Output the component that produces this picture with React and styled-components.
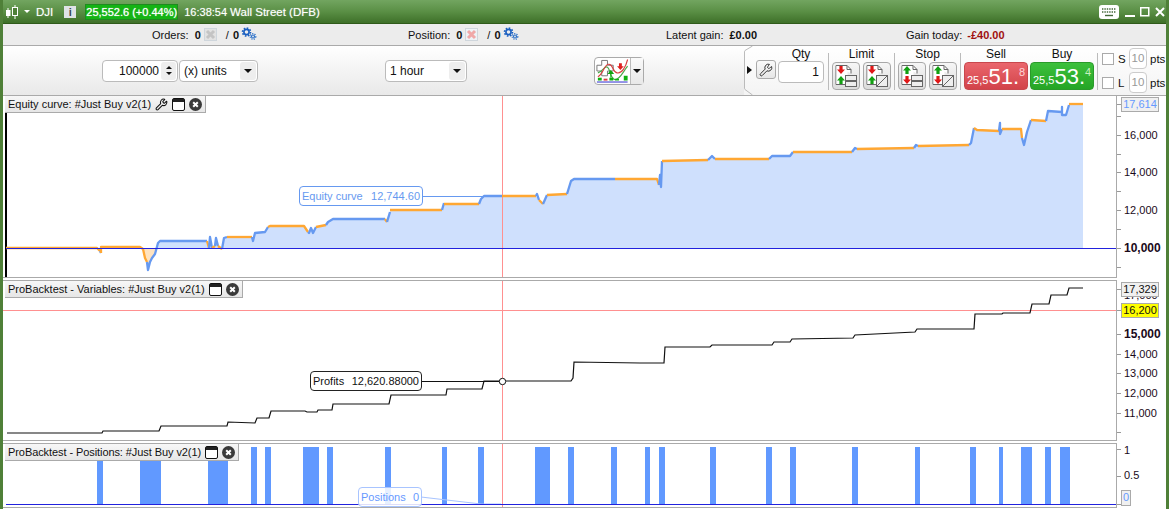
import React from 'react';
import styled, { createGlobalStyle } from 'styled-components';
import { Wrench } from 'lucide-react';

const GlobalStyle = createGlobalStyle`
  html, body { margin: 0; padding: 0; background: #fff; overflow: hidden; }
  body { font-family: "Liberation Sans", Arial, sans-serif; font-size: 11px; color: #111; }
`;

const Frame = styled.div`
  width: 1169px;
  height: 509px;
  box-sizing: border-box;
  border-left: 3px solid #4f8038;
  border-right: 3px solid #4f8038;
  background: #fff;
  overflow: hidden;
  position: relative;
`;

/* title bar */
const TitleBar = styled.div`
  height: 24px;
  margin: 0 -3px;
  box-sizing: border-box;
  padding: 0 4px 0 5px;
  display: flex;
  align-items: center;
  background: linear-gradient(#72a560, #5a8f45 50%, #3e7029);
  border-bottom: 1px solid #2f5a1a;
  color: #fff;
`;

const TitleText = styled.span`
  margin-left: ${(p) => p.$ml || 0}px;
  font-size: ${(p) => p.$fs || 11.5}px;
  text-shadow: 0 0 1px rgba(255, 255, 255, 0.5);
  white-space: nowrap;
`;

const InfoBadge = styled.span`
  width: 12px;
  height: 12px;
  margin-left: 11px;
  background: #dfe3e6;
  color: #3d4a55;
  font-weight: bold;
  font-size: 11px;
  line-height: 12px;
  text-align: center;
`;

const PriceBadge = styled.span`
  margin-left: 9px;
  width: 93px;
  height: 16px;
  box-sizing: border-box;
  border: 1px solid #1f8a1f;
  background: #14b414;
  color: #fff;
  font-size: 11px;
  line-height: 14px;
  text-align: center;
  white-space: nowrap;
  text-shadow: 0 0 1px rgba(255, 255, 255, 0.8);
`;

const WindowIcons = styled.div`
  margin-left: auto;
  display: flex;
  align-items: center;
  gap: 5px;
`;

/* orders / position line */
const StatusBar = styled.div`
  height: 22px;
  box-sizing: border-box;
  padding-left: 149px;
  display: grid;
  grid-template-columns: 256px 258px 240px 1fr;
  align-items: center;
  background: #ececec;
  border-bottom: 1px solid #aaa;
`;

const Stat = styled.div`
  display: flex;
  align-items: center;
  white-space: nowrap;
`;

const StatValue = styled.b`
  margin-left: ${(p) => p.$ml ?? 6}px;
  color: ${(p) => p.$color || '#111'};
`;

const Slash = styled.span`
  margin: 0 4px 0 8px;
`;

/* toolbar */
const Toolbar = styled.div`
  height: 50px;
  box-sizing: border-box;
  display: flex;
  align-items: center;
  background: linear-gradient(#fff, #f6f6f6 40%, #e9e9e9);
  border-bottom: 1px solid #aaa;
`;

const Spinner = styled.div`
  margin-left: 99px;
  width: 76px;
  height: 22px;
  box-sizing: border-box;
  border: 1px solid #bbb;
  border-radius: 4px;
  background: #fff;
  display: flex;
  align-items: center;
  justify-content: flex-end;
  padding-right: 1px;
  font-size: 12px;
`;

const SpinArrows = styled.span`
  width: 15px;
  height: 18px;
  margin-left: 2px;
  background: #eee;
  border-radius: 3px;
  display: flex;
  flex-direction: column;
  align-items: center;
  justify-content: center;
  gap: 3px;
`;

const Tri = styled.i`
  display: block;
  width: 0;
  height: 0;
  border-left: ${(p) => p.$size || 3}px solid transparent;
  border-right: ${(p) => p.$size || 3}px solid transparent;
  ${(p) => (p.$up ? 'border-bottom' : 'border-top')}: ${(p) => p.$size || 3}px solid ${(p) => p.$color || '#111'};
  margin-left: ${(p) => p.$ml || 0}px;
`;

const Select = styled.div`
  margin-left: ${(p) => p.$ml}px;
  width: ${(p) => p.$w}px;
  height: 22px;
  box-sizing: border-box;
  border: 1px solid #bbb;
  border-radius: 4px;
  background: #fff;
  display: flex;
  align-items: center;
  justify-content: space-between;
  padding: 0 1px 0 4px;
  font-size: 12px;
`;

const SelectArrow = styled.span`
  width: 16px;
  height: 18px;
  background: #eee;
  border-radius: 3px;
  display: flex;
  align-items: center;
  justify-content: center;
`;

const IndicatorButton = styled.div`
  margin-left: 127px;
  width: 50px;
  height: 28px;
  box-sizing: border-box;
  border: 1px solid #aaa;
  border-radius: 4px;
  background: #fff;
  display: flex;
  align-items: stretch;
`;

const IndicatorArrow = styled.span`
  margin-left: auto;
  width: 13px;
  border-left: 1px solid #bbb;
  background: linear-gradient(#fafafa, #e8e8e8);
  display: flex;
  align-items: center;
  justify-content: center;
`;

/* order ticket on the right of the toolbar */
const TradePanel = styled.div`
  margin-left: auto;
  width: 422px;
  height: 49px;
  padding-left: 3px;
  box-sizing: border-box;
  display: flex;
  position: relative;
  background: linear-gradient(#fff, #f4f4f4);
`;

const Bevel = styled.svg`
  position: absolute;
  left: 0;
  top: 0;
`;

const Arrow = styled.i`
  align-self: center;
  display: block;
  width: 0;
  height: 0;
  margin-top: -1px;
  border-top: 4px solid transparent;
  border-bottom: 4px solid transparent;
  border-left: 5px solid #111;
`;

const ToolButton = styled.div`
  margin: 14px 0 0 4px;
  width: 20px;
  height: 19px;
  box-sizing: border-box;
  border: 1px solid #aaa;
  border-radius: 3px;
  background: linear-gradient(#fafafa, #e6e6e6);
  display: flex;
  align-items: center;
  justify-content: center;
`;

const Group = styled.div`
  display: flex;
  flex-direction: column;
  align-items: center;
  width: ${(p) => p.$w}px;
  margin-left: ${(p) => p.$ml || 0}px;
`;

const GroupLabel = styled.div`
  height: 16px;
  line-height: 16px;
  font-size: 12px;
  text-align: center;
`;

const QtyField = styled.div`
  width: 100%;
  height: 22px;
  margin-top: -1px;
  box-sizing: border-box;
  border: 1px solid #bbb;
  border-radius: 4px;
  background: #fff;
  text-align: right;
  padding-right: 4px;
  line-height: 20px;
  font-size: 12px;
`;

const Separator = styled.div`
  width: 1px;
  height: 37px;
  margin: 7px 3px 0 ${(p) => p.$ml || 3}px;
  background: #bbb;
`;

const ButtonRow = styled.div`
  display: flex;
  gap: ${(p) => p.$gap || 4}px;
  width: 100%;
`;

const OrderButton = styled.div`
  width: 28px;
  height: 28px;
  box-sizing: border-box;
  border: 1px solid #a8a8a8;
  border-radius: 4px;
  background: linear-gradient(#f6f6f6, #dcdcdc);
`;

const QuoteButton = styled.div`
  width: 64px;
  height: 28px;
  box-sizing: border-box;
  border-radius: 4px;
  border: 1px solid ${(p) => (p.$buy ? '#2a9a2a' : '#c8474d')};
  background: ${(p) =>
    p.$buy ? 'linear-gradient(#3cc03c, #25a525)' : 'linear-gradient(#ea666c, #d2434a)'};
  color: #fff;
  display: flex;
  align-items: flex-start;
  padding-left: 2px;
  white-space: nowrap;
`;

const QuoteSmall = styled.span`
  font-size: 11px;
  margin-top: 11px;
`;

const QuoteBig = styled.span`
  font-size: 22px;
  line-height: 25px;
  margin-top: 1px;
`;

const QuoteTail = styled.span`
  font-size: 11px;
  margin: 3px 0 0 0;
  color: ${(p) => (p.$buy ? '#c8f0c0' : '#ffd6d8')};
`;

const Stops = styled.div`
  margin-left: 1px;
  display: flex;
  flex-direction: column;
  padding-top: 2px;
  gap: 3px;
`;

const StopRow = styled.div`
  display: flex;
  align-items: center;
  height: 21px;
  font-size: 11.5px;
`;

const CheckBox = styled.span`
  width: 12px;
  height: 12px;
  box-sizing: border-box;
  border: 1px solid #aaa;
  background: #fff;
  margin-right: 4px;
`;

const StopLetter = styled.span`
  width: 11px;
`;

const StopField = styled.span`
  width: 18px;
  height: 21px;
  box-sizing: border-box;
  border: 1px solid #ccc;
  border-radius: 4px;
  background: #fff;
  color: #999;
  text-align: center;
  line-height: 19px;
  margin-right: 3px;
`;

/* chart panels */
const Panel = styled.div`
  display: flex;
  height: ${(p) => p.$h}px;
  margin-top: ${(p) => p.$gap || 0}px;
`;

const Plot = styled.div`
  position: relative;
  width: 1114px;
  box-sizing: border-box;
  border-right: 1px solid #aaa;
  border-bottom: 1px solid #aaa;
  border-top: ${(p) => (p.$noTop ? 'none' : '1px solid #aaa')};
  background: #fff;

  svg.chart { display: block; }
`;

const Legend = styled.div`
  position: absolute;
  left: 2px;
  top: 0;
  height: 17px;
  box-sizing: border-box;
  padding: 0 3px;
  display: flex;
  align-items: center;
  gap: 4px;
  background: linear-gradient(#f7f7f7, #e6e6e6);
  border-right: 1px solid #aaa;
  border-bottom: 1px solid #aaa;
  font-size: 11px;
  white-space: nowrap;
`;

const LegendText = styled.span`
  letter-spacing: ${(p) => p.$ls || 0}px;
`;

const CurveTag = styled.div`
  position: absolute;
  left: ${(p) => p.$left}px;
  top: ${(p) => p.$top}px;
  width: ${(p) => p.$w}px;
  height: 20px;
  box-sizing: border-box;
  padding: 0 2px;
  display: flex;
  justify-content: space-between;
  align-items: center;
  border: 1px solid ${(p) => p.$border};
  border-radius: 4px;
  background: ${(p) => p.$bg || '#fff'};
  color: ${(p) => p.$color};
  font-size: 11px;
  white-space: nowrap;
`;

const Axis = styled.div`
  position: relative;
  width: 49px;
  svg { display: block; }
`;

const ValueBox = styled.div`
  position: absolute;
  left: ${(p) => p.$left}px;
  top: ${(p) => p.$top}px;
  width: ${(p) => p.$w}px;
  height: ${(p) => p.$h || 15}px;
  box-sizing: border-box;
  border: 1px solid #aaa;
  background: ${(p) => p.$bg || '#f0f0f0'};
  color: ${(p) => p.$color || '#111'};
  font-size: 11px;
  line-height: 13px;
  text-align: center;
`;

/* chart data, page coordinates */
const equityRuns = [
  ['#ffa733', [[6, 248], [97, 248], [100, 251]]],
  ['#6699f0', [[100, 251], [101, 253]]],
  ['#ffa733', [[101, 253], [101, 247], [140, 247], [143, 249], [145, 258], [147, 262]]],
  ['#6699f0', [[147, 262], [148, 270], [150, 262], [152, 258], [155, 254], [158, 243], [160, 241], [207, 241]]],
  ['#ffa733', [[207, 241], [209, 248]]],
  ['#6699f0', [[209, 248], [210, 237], [212, 248]]],
  ['#ffa733', [[212, 248], [215, 246]]],
  ['#6699f0', [[215, 246], [216, 238], [218, 246]]],
  ['#ffa733', [[218, 246], [222, 249]]],
  ['#6699f0', [[222, 249], [224, 238], [227, 237]]],
  ['#ffa733', [[227, 237], [252, 237]]],
  ['#6699f0', [[252, 237], [253, 241], [255, 233], [265, 232], [268, 227]]],
  ['#ffa733', [[268, 227], [270, 226], [304, 226], [308, 232]]],
  ['#6699f0', [[308, 232], [309, 233], [311, 228], [313, 233], [316, 227]]],
  ['#ffa733', [[316, 227], [326, 225]]],
  ['#6699f0', [[326, 225], [328, 222], [333, 219], [385, 219]]],
  ['#ffa733', [[385, 219], [387, 222]]],
  ['#6699f0', [[387, 222], [390, 212]]],
  ['#ffa733', [[390, 210], [442, 210]]],
  ['#6699f0', [[442, 210], [444, 203]]],
  ['#ffa733', [[444, 204], [479, 204]]],
  ['#6699f0', [[479, 204], [481, 199], [484, 196], [502, 196]]],
  ['#ffa733', [[502, 196], [536, 196]]],
  ['#6699f0', [[536, 196], [537, 194], [539, 200]]],
  ['#ffa733', [[539, 200], [543, 204]]],
  ['#6699f0', [[543, 204], [547, 195]]],
  ['#ffa733', [[547, 195], [567, 194]]],
  ['#6699f0', [[567, 194], [571, 181], [574, 179], [615, 179]]],
  ['#ffa733', [[615, 179], [657, 179], [659, 185]]],
  ['#6699f0', [[659, 185], [660, 175], [661, 187], [662, 161]]],
  ['#ffa733', [[662, 161], [708, 160]]],
  ['#6699f0', [[708, 160], [712, 156], [715, 159]]],
  ['#ffa733', [[715, 159], [769, 159]]],
  ['#6699f0', [[769, 159], [772, 156], [790, 156], [793, 152]]],
  ['#ffa733', [[793, 152], [852, 152]]],
  ['#6699f0', [[852, 152], [855, 148], [857, 149]]],
  ['#ffa733', [[857, 149], [914, 148]]],
  ['#6699f0', [[914, 148], [916, 145], [918, 146]]],
  ['#ffa733', [[918, 146], [969, 145]]],
  ['#6699f0', [[969, 145], [971, 143], [974, 128]]],
  ['#ffa733', [[974, 128], [977, 130], [999, 131]]],
  ['#6699f0', [[999, 131], [1000, 123], [1000, 134], [1002, 129]]],
  ['#ffa733', [[1002, 129], [1021, 129], [1022, 138]]],
  ['#6699f0', [[1022, 138], [1024, 145], [1027, 132], [1031, 120]]],
  ['#ffa733', [[1031, 120], [1046, 121]]],
  ['#6699f0', [[1046, 121], [1048, 111], [1062, 112], [1062, 107], [1062, 115], [1066, 115], [1069, 105]]],
  ['#ffa733', [[1069, 104], [1083, 104]]],
];

const profits = [
  [7, 433], [102, 433], [103, 431], [159, 431], [161, 426], [227, 426], [228, 422], [255, 423], [257, 418],
  [269, 418], [271, 411], [305, 411], [307, 412], [317, 412], [318, 410], [332, 410], [333, 404], [389, 404],
  [391, 395], [446, 395], [447, 389], [482, 389], [484, 381], [571, 381], [573, 378], [574, 362], [640, 363],
  [664, 363], [665, 347], [710, 347], [712, 345], [772, 345], [774, 342], [790, 342], [792, 339], [853, 338],
  [855, 335], [915, 332], [917, 329], [974, 329], [975, 314], [1002, 314], [1003, 313], [1030, 313],
  [1032, 304], [1049, 304], [1051, 295], [1067, 295], [1069, 288], [1083, 288],
];

const positionBars = [
  [97, 103], [140, 161], [208, 228], [251, 257], [265, 271], [303, 319], [327, 333], [385, 391], [442, 447],
  [478, 484], [535, 550], [568, 574], [611, 617], [645, 650], [659, 665], [710, 716], [766, 772], [790, 796],
  [852, 858], [915, 920], [970, 976], [999, 1003], [1021, 1032], [1045, 1051], [1060, 1070],
];

const toPoints = (pts) => pts.map((p) => p.join(',')).join(' ');

/* small drawings */
const CandleIcon = () => (
  <svg width="14" height="14" viewBox="0 0 14 14" style={{ flexShrink: 0 }}>
    <path d="M3 3v10M10 0v14" stroke="#fff" strokeWidth="1" />
    <rect x="1" y="5" width="4.5" height="6" fill="#fff" />
    <rect x="7.5" y="2.5" width="5" height="8" fill="#4f8038" stroke="#fff" />
  </svg>
);

const KeyboardIcon = () => (
  <svg width="20" height="14" viewBox="0 0 20 14" style={{ marginRight: 1 }}>
    <rect width="20" height="14" rx="3" fill="#fff" />
    <path d="M3 4h14M3 7h14" stroke="#44683a" strokeWidth="1.4" strokeDasharray="1.4 1" />
    <path d="M6 10.5h8" stroke="#44683a" strokeWidth="1.4" />
  </svg>
);

const MinIcon = () => (
  <svg width="10" height="10" viewBox="0 0 10 10"><path d="M0 9h10" stroke="#fff" strokeWidth="2" /></svg>
);
const MaxIcon = () => (
  <svg width="10" height="10" viewBox="0 0 10 10">
    <rect x="0.75" y="0.75" width="8" height="8" fill="none" stroke="#fff" strokeWidth="1.5" />
  </svg>
);
const CloseWinIcon = () => (
  <svg width="10" height="10" viewBox="0 0 10 10">
    <path d="M1 1l8 8M9 1l-8 8" stroke="#fff" strokeWidth="2" />
  </svg>
);

const CancelIcon = ({ x, page, ml }) => (
  <svg width="14" height="13" viewBox="0 0 14 13" style={{ marginLeft: ml }}>
    <rect x="0.5" y="0.5" width="12" height="12" fill={page} stroke="#cfd6dc" />
    <path d="M3 3l7 7M10 3l-7 7" stroke={x} strokeWidth="3" />
  </svg>
);

const GearsIcon = () => (
  <svg width="16" height="13" viewBox="0 0 16 13" style={{ marginLeft: 2, marginTop: -3 }}>
    <circle cx="5.5" cy="5" r="2.6" fill="none" stroke="#1a5fc0" strokeWidth="1.6" />
    <circle cx="5.5" cy="5" r="4" fill="none" stroke="#1a5fc0" strokeWidth="1.6" strokeDasharray="1.6 1.5" />
    <circle cx="12" cy="9.5" r="1.5" fill="none" stroke="#2b70c8" strokeWidth="1.2" />
    <circle cx="12" cy="9.5" r="2.8" fill="none" stroke="#2b70c8" strokeWidth="1.2" strokeDasharray="1.2 1.2" />
  </svg>
);

const PaneIcon = () => (
  <svg width="13" height="13" viewBox="0 0 13 13">
    <rect x="0.5" y="0.5" width="12" height="12" rx="1.5" fill="#fff" stroke="#111" />
    <rect x="1" y="1" width="11" height="3" fill="#222" />
  </svg>
);

const CloseIcon = () => (
  <svg width="13" height="13" viewBox="0 0 13 13">
    <circle cx="6.5" cy="6.5" r="6.5" fill="#3a3a3a" />
    <path d="M4.2 4.2l4.6 4.6M8.8 4.2l-4.6 4.6" stroke="#fff" strokeWidth="2" />
  </svg>
);

const IndicatorIcon = () => (
  <svg width="36" height="26" viewBox="0 0 36 26">
    <path d="M7 2h6v5h6v6h-6v5H7v-5H2V7h5z" fill="#fff" stroke="#777" strokeWidth="1" />
    <path d="M3 15c5-1 7-8 10-6s3 13 8 13 8-8 13-14" fill="none" stroke="#4aa84a" strokeWidth="1.2" />
    <path d="M3 19c6-3 6-12 11-13s4 8 9 9 9-6 11-14" fill="none" stroke="#d84040" strokeWidth="1.2" />
    <path d="M16 16l-3 0 3.5-4 3.5 4-3 0 0 4h-1z" fill="#10a510" />
    <path d="M25 5h3v3h2l-3.5 4-3.5-4h2z" fill="#e02020" />
    <path d="M3 20h4v3H3zM15 20h4v3h-4zM21 21h4v2h-4zM30 18h4v5h-4z" fill="#10b010" />
    <path d="M9 21h4v2H9z" fill="#d84040" />
    <path d="M2 24.5h32" stroke="#2222cc" strokeWidth="1" />
  </svg>
);

const UpArrow = ({ y }) => <path d={`M6 ${y}l4 4.5h-2.4v3.5h-3.2v-3.5h-2.4z`} transform="translate(2 0)" fill="#12a012" />;
const DownArrow = ({ y }) => <path d={`M6 ${y + 8}l4-4.5h-2.4v-3.5h-3.2v3.5h-2.4z`} transform="translate(2 0)" fill="#e01818" />;

const OrderIcon = ({ stop, slash }) => (
  <svg width="26" height="26" viewBox="0 0 26 26" style={{ display: 'block' }}>
    <path d="M3 2.5h11l4 4v4" fill="#fff" stroke="#666" />
    <path d="M3 2.5v19h9" fill="#fff" stroke="#666" />
    <rect x="3.5" y="3" width="11" height="18" fill="#fff" />
    <path d="M14 2.5v4h4" fill="none" stroke="#666" />
    {stop ? <UpArrow y={3} /> : <DownArrow y={3} />}
    {stop ? <DownArrow y={13} /> : <UpArrow y={13} />}
    <rect x="12.5" y="12.5" width="11" height="11" fill="#eee" stroke="#666" />
    {slash ? <path d="M13 23L23 13" stroke="#666" /> : <path d="M12.5 18h11" stroke="#666" strokeWidth="2" />}
  </svg>
);

const AxisLabels = ({ top, h, ticks, labels }) => (
  <svg width="49" height={h} viewBox={`1117 ${top} 49 ${h}`}>
    {ticks.map((y) => (
      <path key={y} d={`M1117 ${y + 0.5}h4`} stroke="#999" />
    ))}
    {labels.map((l) => (
      <text
        key={l.text}
        x={l.x || 1124}
        y={l.y + 4}
        fontFamily="Liberation Sans, Arial, sans-serif"
        fontSize={l.bold ? 12 : 11}
        fontWeight={l.bold ? 'bold' : 'normal'}
        fill="#1a0a1a"
      >
        {l.text}
      </text>
    ))}
  </svg>
);

const Crosshair = ({ top, h }) => <path d={`M502.5 ${top}v${h}`} stroke="#ff9090" />;

const EquityChart = () => {
  const all = equityRuns.flatMap((r) => r[1]);
  const area = toPoints([...all, [1083, 248], [6, 248]]);
  return (
    <svg className="chart" width="1113" height="181" viewBox="3 96 1113 181">
      <defs>
        <clipPath id="above"><rect x="0" y="96" width="1169" height="152" /></clipPath>
        <clipPath id="below"><rect x="0" y="248" width="1169" height="30" /></clipPath>
      </defs>
      <polygon points={area} fill="#cfe0fd" clipPath="url(#above)" />
      <polygon points={area} fill="#ffe3bf" clipPath="url(#below)" />
      <path d="M6 113v164" stroke="#000" strokeWidth="2" />
      <Crosshair top={96} h={181} />
      <path d="M422 196.5h62" stroke="#6699f0" />
      {equityRuns.map((r, i) => (
        <polyline key={i} points={toPoints(r[1])} fill="none" stroke={r[0]} strokeWidth="2.3" strokeLinejoin="round" />
      ))}
      <path d="M6 248.5h1110" stroke="#2222dd" strokeWidth="1.2" />
    </svg>
  );
};

const VariablesChart = () => (
  <svg className="chart" width="1113" height="159" viewBox="3 281 1113 159">
    <path d="M3 310.5h1113" stroke="#ff9090" />
    <Crosshair top={281} h={159} />
    <path d="M421 381.5h81" stroke="#111" />
    <polyline points={toPoints(profits)} fill="none" stroke="#111" strokeWidth="1.2" />
    <circle cx="502.5" cy="381.5" r="3.2" fill="#fff" stroke="#111" />
  </svg>
);

const PositionsChart = () => (
  <svg className="chart" width="1113" height="63" viewBox="3 444 1113 63">
    {positionBars.map(([a, b]) => (
      <rect key={a} x={a} y="447" width={b - a} height="57" fill="#6199ff" />
    ))}
    <Crosshair top={444} h={63} />
    <path d="M421 497l60 7h20" fill="none" stroke="#a8c4ff" strokeWidth="1.2" />
    <path d="M6 504.5h1110" stroke="#2222dd" strokeWidth="1.2" />
  </svg>
);

export default function App() {
  return (
    <Frame>
      <GlobalStyle />
      <TitleBar>
        <CandleIcon />
        <Tri $size={3} $color="#fff" $ml={5} />
        <TitleText $ml={6}>DJI</TitleText>
        <InfoBadge>i</InfoBadge>
        <PriceBadge>25,552.6 (+0.44%)</PriceBadge>
        <TitleText $ml={6} $fs={11}>16:38:54</TitleText>
        <TitleText $ml={3}>Wall Street (DFB)</TitleText>
        <WindowIcons>
          <KeyboardIcon />
          <MinIcon />
          <MaxIcon />
          <CloseWinIcon />
        </WindowIcons>
      </TitleBar>

      <StatusBar>
        <Stat>
          Orders:<StatValue>0</StatValue>
          <CancelIcon x="#c4c4c4" page="#e2e2e2" ml={3} />
          <Slash>/</Slash><StatValue $ml={0}>0</StatValue>
          <GearsIcon />
        </Stat>
        <Stat>
          Position:<StatValue>0</StatValue>
          <CancelIcon x="#f0a8a8" page="#eef2f6" ml={3} />
          <Slash>/</Slash><StatValue $ml={0}>0</StatValue>
          <GearsIcon />
        </Stat>
        <Stat>
          Latent gain:<StatValue>£0.00</StatValue>
        </Stat>
        <Stat>
          Gain today:<StatValue $ml={5} $color="#a01010">-£40.00</StatValue>
        </Stat>
      </StatusBar>

      <Toolbar>
        <Spinner>
          100000
          <SpinArrows>
            <Tri $up />
            <Tri />
          </SpinArrows>
        </Spinner>
        <Select $ml={1} $w={79}>
          (x) units
          <SelectArrow><Tri $size={4} /></SelectArrow>
        </Select>
        <Select $ml={127} $w={82}>
          1 hour
          <SelectArrow><Tri $size={4} /></SelectArrow>
        </Select>
        <IndicatorButton>
          <IndicatorIcon />
          <IndicatorArrow><Tri $size={4} /></IndicatorArrow>
        </IndicatorButton>

        <TradePanel>
          <Bevel width="9" height="49" viewBox="0 0 9 49">
            <path d="M8.5 0L1 4.5Q0.5 5 0.5 6V42Q0.5 43 1 43.5L8.5 49" fill="none" stroke="#bbb" />
          </Bevel>
          <Arrow />
          <ToolButton><Wrench size={14} strokeWidth={1.6} color="#222" /></ToolButton>
          <Group $w={46} $ml={2}>
            <GroupLabel>Qty</GroupLabel>
            <QtyField>1</QtyField>
          </Group>
          <Separator $ml={4} />
          <Group $w={59}>
            <GroupLabel>Limit</GroupLabel>
            <ButtonRow $gap={3}>
              <OrderButton><OrderIcon /></OrderButton>
              <OrderButton><OrderIcon slash /></OrderButton>
            </ButtonRow>
          </Group>
          <Separator />
          <Group $w={59}>
            <GroupLabel>Stop</GroupLabel>
            <ButtonRow $gap={3}>
              <OrderButton><OrderIcon stop /></OrderButton>
              <OrderButton><OrderIcon stop slash /></OrderButton>
            </ButtonRow>
          </Group>
          <Separator />
          <Group $w={64}>
            <GroupLabel>Sell</GroupLabel>
            <QuoteButton>
              <QuoteSmall>25,5</QuoteSmall>
              <QuoteBig>51.</QuoteBig>
              <QuoteTail>8</QuoteTail>
            </QuoteButton>
          </Group>
          <Group $w={64} $ml={2}>
            <GroupLabel>Buy</GroupLabel>
            <QuoteButton $buy>
              <QuoteSmall>25,5</QuoteSmall>
              <QuoteBig>53.</QuoteBig>
              <QuoteTail $buy>4</QuoteTail>
            </QuoteButton>
          </Group>
          <Separator />
          <Stops>
            <StopRow><CheckBox /><StopLetter>S</StopLetter><StopField>10</StopField>pts</StopRow>
            <StopRow><CheckBox /><StopLetter>L</StopLetter><StopField>10</StopField>pts</StopRow>
          </Stops>
        </TradePanel>
      </Toolbar>

      <Panel $h={182}>
        <Plot $noTop>
          <EquityChart />
          <Legend>
            <LegendText>Equity curve: #Just Buy v2(1)</LegendText>
            <Wrench size={13} strokeWidth={1.9} color="#111" />
            <PaneIcon />
            <CloseIcon />
          </Legend>
          <CurveTag $left={296} $top={90} $w={124} $border="#6699f0" $color="#6699f0">
            <span>Equity curve</span><span>12,744.60</span>
          </CurveTag>
        </Plot>
        <Axis>
          <AxisLabels
            top={96}
            h={182}
            ticks={[104, 116, 135, 154, 172, 191, 210, 229, 248, 267]}
            labels={[
              { text: '16,000', y: 135 },
              { text: '14,000', y: 172 },
              { text: '12,000', y: 210 },
              { text: '10,000', y: 248, bold: true },
            ]}
          />
          <ValueBox $left={4} $top={1} $w={38} $color="#6699ff">17,614</ValueBox>
        </Axis>
      </Panel>

      <Panel $h={161} $gap={2}>
        <Plot>
          <VariablesChart />
          <Legend>
            <LegendText>ProBacktest - Variables: #Just Buy v2(1)</LegendText>
            <PaneIcon />
            <CloseIcon />
          </Legend>
          <CurveTag $left={307} $top={90} $w={112} $border="#222" $color="#111">
            <span>Profits</span><span>12,620.88000</span>
          </CurveTag>
        </Plot>
        <Axis>
          <AxisLabels
            top={280}
            h={161}
            ticks={[289, 310, 334, 354, 373, 393, 413, 432]}
            labels={[
              { text: '17,000', y: 295 },
              { text: '15,000', y: 334, bold: true },
              { text: '14,000', y: 354 },
              { text: '13,000', y: 373 },
              { text: '12,000', y: 393 },
              { text: '11,000', y: 413 },
            ]}
          />
          <ValueBox $left={4} $top={2} $w={38}>17,329</ValueBox>
          <ValueBox $left={4} $top={23} $w={38} $bg="#ffff00">16,200</ValueBox>
        </Axis>
      </Panel>

      <Panel $h={65} $gap={2}>
        <Plot>
          <PositionsChart />
          <Legend>
            <LegendText $ls={-0.08}>ProBacktest - Positions: #Just Buy v2(1)</LegendText>
            <PaneIcon />
            <CloseIcon />
          </Legend>
          <CurveTag $left={355} $top={43} $w={64} $border="#a8c4ff" $color="#6699ff" $bg="rgba(255,255,255,0.85)">
            <span>Positions</span><span>0</span>
          </CurveTag>
        </Plot>
        <Axis>
          <AxisLabels
            top={443}
            h={65}
            ticks={[449, 476, 504]}
            labels={[
              { text: '1', y: 450 },
              { text: '0.5', y: 475 },
            ]}
          />
          <ValueBox $left={4} $top={47} $w={10} $h={16} $color="#6699ff">0</ValueBox>
        </Axis>
      </Panel>
    </Frame>
  );
}
